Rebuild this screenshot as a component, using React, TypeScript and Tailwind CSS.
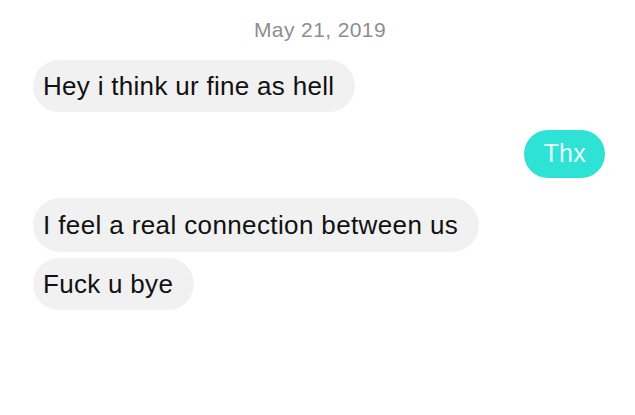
export default function App() {
  return (
    <div className="w-[635px] h-[415px] bg-white overflow-hidden font-['Liberation_Sans',Arial,sans-serif]">
      <div className="flex flex-col pt-[15px] pl-[33px] pr-[30px]">
        <div className="text-center text-[21px] leading-[30px] tracking-[0.4px] text-[#8e8e8e] pl-[2px]">May 21, 2019</div>
        <div className="mt-[15px] self-start rounded-[26px] bg-[#f1f1f1] h-[52px] pl-[10px] pr-[21px] flex items-center">
          <span className="text-[26px] tracking-[0.3px] text-[#111]">Hey i think ur fine as hell</span>
        </div>
        <div className="mt-[18px] self-end rounded-[24px] bg-[#2ee2d6] h-[48px] px-[19px] flex items-center">
          <span className="text-[25px] tracking-[0.3px] text-[#e8fffd]">Thx</span>
        </div>
        <div className="mt-[20px] self-start rounded-[27px] bg-[#f1f1f1] h-[54px] pl-[10px] pr-[21px] flex items-center">
          <span className="text-[26px] tracking-[0.38px] text-[#111]">I feel a real connection between us</span>
        </div>
        <div className="mt-[6px] self-start rounded-[26px] bg-[#f1f1f1] h-[52px] pl-[10px] pr-[21px] flex items-center">
          <span className="text-[26px] tracking-[0.3px] text-[#111]">Fuck u bye</span>
        </div>
      </div>
    </div>
  );
}
